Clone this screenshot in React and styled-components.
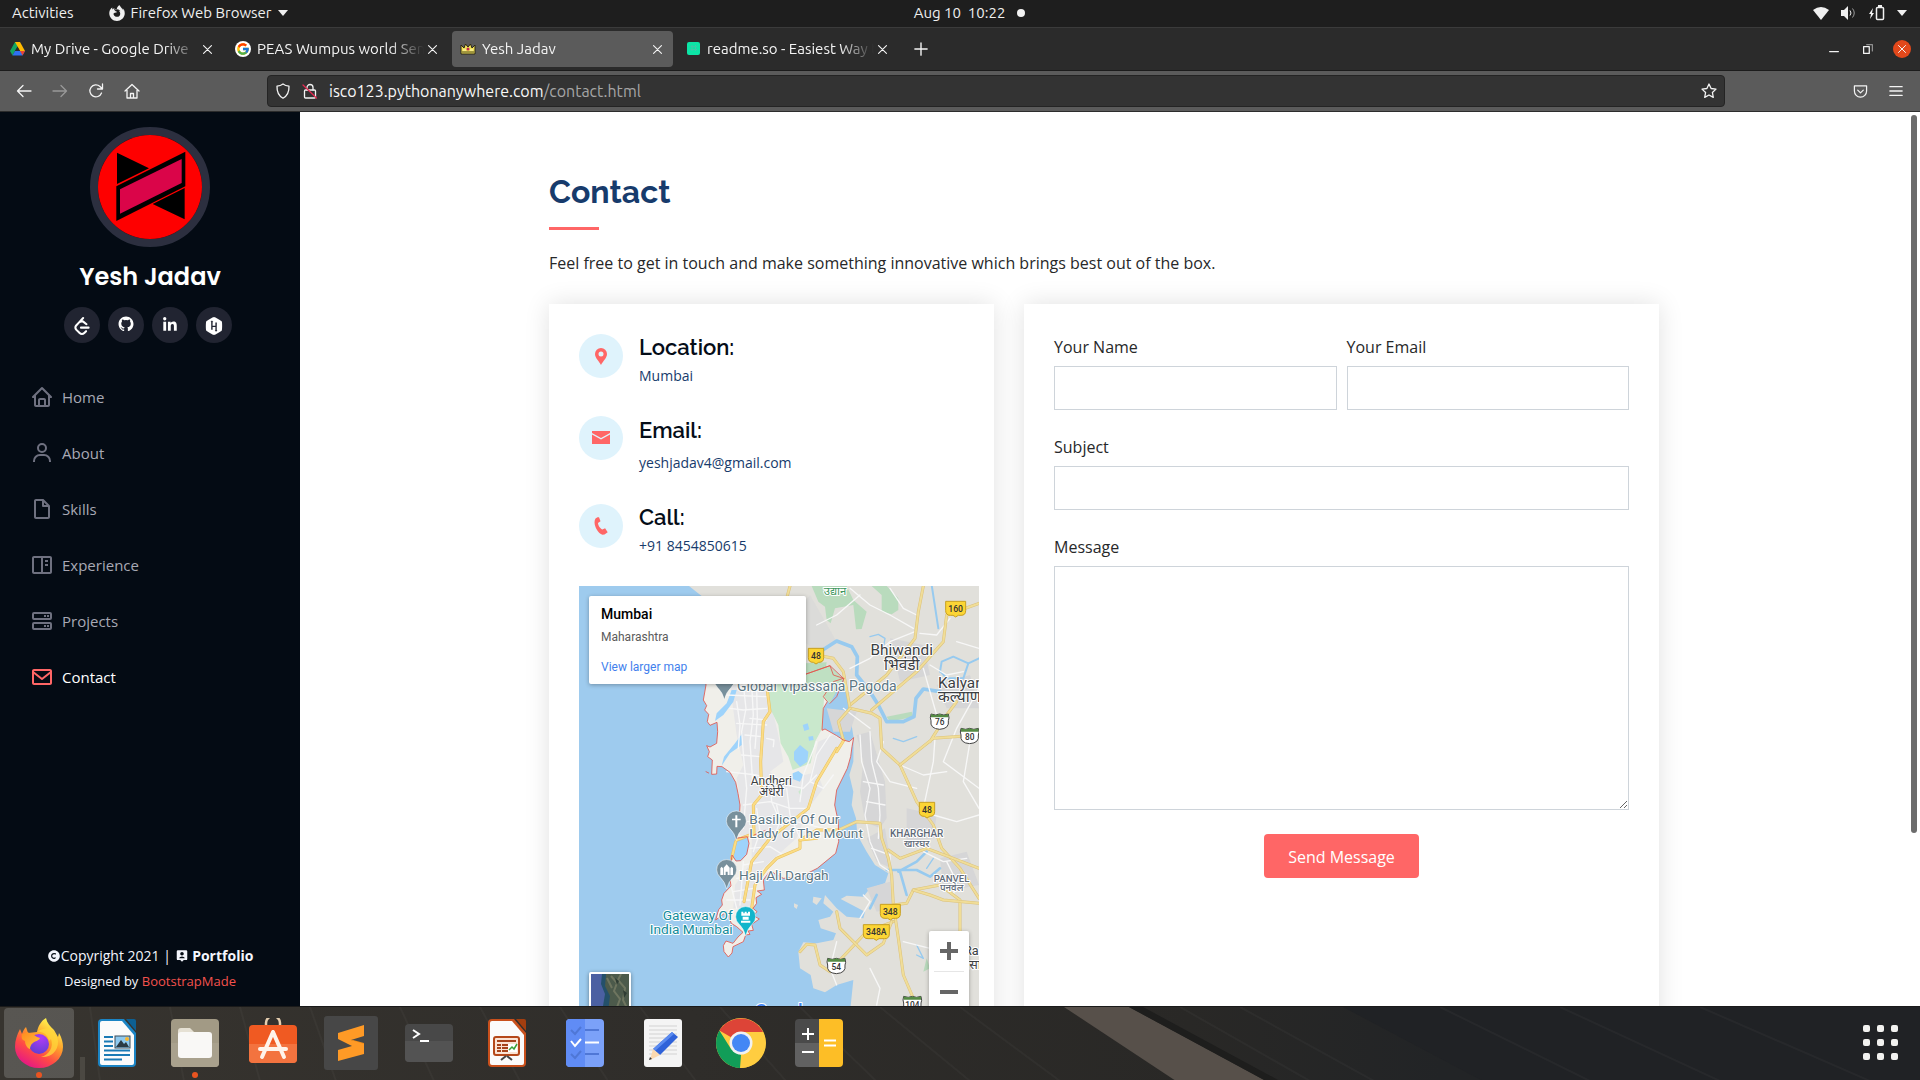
import React from "react";
import styled, { createGlobalStyle, css } from "styled-components";
import {
  BiHome,
  BiUser,
  BiFileBlank,
  BiBookContent,
  BiServer,
  BiEnvelope,
  BiLogoGithub,
  BiLogoLinkedin,
  BiSolidCopyright,
  BiSolidUserPin,
} from "react-icons/bi";
import { SiLeetcode, SiFirefoxbrowser } from "react-icons/si";
import { FaHackerrank } from "react-icons/fa";
import { FcGoogle } from "react-icons/fc";

const ui = `Ubuntu, "Open Sans", sans-serif`;
const body = `"Open Sans", "Noto Sans", sans-serif`;
const heading = `Raleway, Inter, sans-serif`;
const coral = "#ff6666";

const GlobalStyle = createGlobalStyle`
  *, *::before, *::after { box-sizing: border-box; }
  html, body { margin: 0; padding: 0; }
  body { background: #1e1e1e; font-family: ${body}; color: #272829; overflow: hidden; }
  h1, h2, h3, p, ul { margin: 0; padding: 0; }
  ul { list-style: none; }
  button { font: inherit; border: 0; padding: 0; background: none; color: inherit; cursor: pointer; }
  a { text-decoration: none; color: inherit; }
  svg { display: block; }
`;

const Desktop = styled.div`
  display: flex;
  flex-direction: column;
  height: 100vh;
`;

/* ---------- system bar ---------- */

const SystemBar = styled.header`
  display: grid;
  grid-template-columns: 1fr auto 1fr;
  align-items: center;
  flex: none;
  height: 28px;
  padding: 0 13px 1px 12px;
  border-bottom: 1px solid #3b3b3b;
  background: #1e1e1e;
  color: #f0f0f0;
  font: 15px/26px ${ui};
`;

const SystemGroup = styled.div`
  display: flex;
  align-items: center;
  gap: ${(p) => p.$gap}px;
  justify-content: ${(p) => (p.$end ? "flex-end" : "flex-start")};
`;

const SystemButton = styled.button`
  display: flex;
  align-items: center;
  gap: 6px;
`;

const Clock = styled.time`
  white-space: pre;
  position: relative;
  &::after {
    content: "";
    position: absolute;
    right: -20px;
    top: 9px;
    width: 8px;
    height: 8px;
    border-radius: 50%;
    background: #f2f2f2;
  }
`;

/* ---------- browser chrome ---------- */

const TabStrip = styled.div`
  display: flex;
  align-items: center;
  flex: none;
  height: 43px;
  padding-right: 9px;
  border-bottom: 1px solid #1c1c1c;
  background: #2b2b2b;
  color: #f4f4f4;
`;

const Tab = styled.div`
  display: flex;
  align-items: center;
  width: 221px;
  height: 36px;
  margin: 0 2px;
  padding: 0 8px;
  border-radius: 4px;
  background: ${(p) => (p.$active ? "#5b5b5b" : "transparent")};
`;

const TabTitle = styled.span`
  flex: 1;
  min-width: 0;
  margin-left: 6px;
  overflow: hidden;
  white-space: nowrap;
  font: 15px/22px ${ui};
  mask-image: linear-gradient(to right, #000 calc(100% - 34px), transparent);
`;

const TabClose = styled.button`
  width: 16px;
  height: 16px;
  display: grid;
  place-items: center;
`;

const NewTab = styled.button`
  width: 42px;
  height: 36px;
  display: grid;
  place-items: center;
`;

const WindowControls = styled.div`
  display: flex;
  align-items: center;
  gap: 16px;
  margin-left: auto;
`;

const WindowButton = styled.button`
  display: grid;
  place-items: center;
  width: 18px;
  height: 18px;
  border-radius: 50%;
  background: ${(p) => (p.$close ? "#e2481b" : "transparent")};
`;

const NavBar = styled.div`
  display: flex;
  align-items: center;
  flex: none;
  height: 41px;
  padding: 0 6px;
  border-bottom: 1px solid #2c2c2c;
  background: #5b5b5b;
  color: #f4f4f4;
`;

const NavButton = styled.button`
  display: grid;
  place-items: center;
  width: 36px;
  height: 32px;
  opacity: ${(p) => (p.$dim ? 0.4 : 1)};
`;

const Spacer = styled.div`
  width: 117px;
`;

const AddressBar = styled.form`
  display: flex;
  align-items: center;
  flex: 1;
  height: 32px;
  padding: 0 7px;
  border: 1px solid #242424;
  border-radius: 4px;
  background: #333333;
`;

const AddressIcon = styled.span`
  display: grid;
  place-items: center;
  width: ${(p) => p.$w || 16}px;
`;

const Address = styled.a`
  flex: 1;
  font: 16px/24px ${ui};
  color: #f8f8f8;
  span { color: #a6a6a6; }
`;

/* ---------- page ---------- */

const Page = styled.div`
  display: flex;
  flex: 1;
  min-height: 0;
  background: #fff;
`;

const Sidebar = styled.aside`
  display: flex;
  flex-direction: column;
  flex: none;
  width: 300px;
  padding: 15px 0;
  background: #040b14;
  color: #fff;
`;

const Avatar = styled.div`
  width: 120px;
  height: 120px;
  margin: 0 auto;
  border: 8px solid #2c2f3f;
  border-radius: 50%;
  overflow: hidden;
`;

const Name = styled.h1`
  margin: 12px 0;
  font: 600 24px/36px Poppins, Inter, sans-serif;
  text-align: center;
`;

const Socials = styled.div`
  display: flex;
  justify-content: center;
  gap: 8px;
  margin-right: 4px;
`;

const SocialLink = styled.a`
  display: grid;
  place-items: center;
  width: 36px;
  height: 36px;
  padding: ${(p) => (p.$raised ? "0 0 3px" : "2px 0 0")};
  border-radius: 50%;
  background: #212431;
  font-size: 18px;
`;

const Menu = styled.ul`
  display: flex;
  flex-direction: column;
  gap: 32px;
  margin-top: 42px;
  padding-left: 30px;
`;

const MenuLink = styled.a`
  display: flex;
  align-items: center;
  gap: 8px;
  height: 24px;
  font-size: 15px;
  color: ${(p) => (p.$active ? "#fff" : "#a8a9b4")};
  svg {
    font-size: 24px;
    color: ${(p) => (p.$active ? coral : "#6f7180")};
  }
`;

const SideFooter = styled.footer`
  display: flex;
  flex-direction: column;
  align-items: center;
  gap: 5px;
  margin-top: auto;
  color: #f4f6fd;
`;

const Copyright = styled.p`
  display: flex;
  align-items: center;
  white-space: pre;
  font-size: 14px;
  line-height: 21px;
`;

const Credit = styled.p`
  font-size: 13px;
  line-height: 20px;
  a { color: #f4524d; }
`;

const Main = styled.main`
  flex: 1;
  min-width: 0;
  padding: 60px 15px;
  overflow-y: auto;
  scrollbar-width: none;
`;

const Container = styled.section`
  max-width: 1110px;
  margin: 0 auto;
`;

const Title = styled.h2`
  font: 700 32px/40px ${heading};
  color: #173b6c;
  &::after {
    content: "";
    display: block;
    width: 50px;
    height: 3px;
    margin-top: 15px;
    background: ${coral};
  }
`;

const Lead = styled.p`
  margin: 20px 0 28px;
  font-size: 16px;
  line-height: 26px;
`;

const Columns = styled.div`
  display: grid;
  grid-template-columns: 445fr 635fr;
  gap: 30px;
`;

const Card = styled.div`
  min-width: 0;
  padding: 30px;
  background: #fff;
  box-shadow: 0 0 24px rgba(0, 0, 0, 0.12);
`;

const InfoItem = styled.div`
  display: flex;
  gap: 16px;
  margin-bottom: 30px;
  a, p {
    display: block;
    font-size: 14px;
    line-height: 21px;
    color: #173b6c;
  }
  a { line-height: 22px; }
`;

const InfoIcon = styled.div`
  display: grid;
  place-items: center;
  flex: none;
  width: 44px;
  height: 44px;
  border-radius: 50%;
  background: #dff3fc;
`;

const InfoTitle = styled.h3`
  margin-bottom: ${(p) => (p.$loose ? 8 : 5)}px;
  font: 600 22px/${(p) => (p.$loose ? 28 : 26)}px ${heading};
  color: #050d18;
`;

const MapFrame = styled.div`
  position: relative;
  width: 400px;
  height: 450px;
  overflow: hidden;
  font-family: Roboto, sans-serif;
`;

const MapCard = styled.div`
  position: absolute;
  left: 10px;
  top: 10px;
  width: 217px;
  height: 88px;
  padding: 9px 12px;
  border-radius: 2px;
  background: #fff;
  box-shadow: 0 1px 4px rgba(0, 0, 0, 0.3);
  color: #5b5b5b;
  font-size: 12px;
  line-height: 16px;
  h3 {
    margin-bottom: 6px;
    font-size: 14px;
    font-weight: 500;
    line-height: 18px;
    color: #000;
  }
  a { display: block; margin-top: 14px; color: #427fed; }
`;

const ZoomControls = styled.div`
  position: absolute;
  right: 10px;
  bottom: 24px;
  width: 40px;
  border-radius: 2px;
  background: #fff;
  box-shadow: 0 1px 4px rgba(0, 0, 0, 0.3);
  button {
    display: grid;
    place-items: center;
    width: 40px;
    height: 40px;
  }
  hr { margin: 0 5px; border: 0; border-top: 1px solid #e6e6e6; }
`;

const SatelliteButton = styled.button`
  position: absolute;
  left: 10px;
  bottom: 22px;
  width: 42px;
  height: 42px;
  border: 2px solid #fff;
  border-radius: 2px;
  overflow: hidden;
  box-shadow: 0 1px 4px rgba(0, 0, 0, 0.4);
`;

const Form = styled.form`
  display: flex;
  flex-direction: column;
  gap: 24px;
`;

const FormRow = styled.div`
  display: grid;
  grid-template-columns: 1fr 1fr;
  gap: 10px;
`;

const Field = styled.label`
  display: flex;
  flex-direction: column;
  gap: 6px;
  font-size: 16px;
  line-height: 26px;
`;

const fieldBox = css`
  width: 100%;
  padding: 10px 12px;
  border: 1px solid #ced4da;
  border-radius: 0;
  background: #fff;
  font: 14px ${body};
`;

const Input = styled.input`
  ${fieldBox}
  height: 44px;
`;

const TextArea = styled.textarea`
  ${fieldBox}
  display: block;
  height: 244px;
  resize: vertical;
`;

const SendButton = styled.button`
  align-self: center;
  padding: 10px 24px 8px;
  border-radius: 4px;
  background: ${coral};
  color: #fff;
  font-size: 16px;
  line-height: 26px;
`;

const Scrollbar = styled.div`
  flex: none;
  width: 12px;
  padding: 3px 3px 0;
  background: #fff;
  &::before {
    content: "";
    display: block;
    width: 6px;
    height: calc(80% + 5px);
    border-radius: 3px;
    background: #6c6c6c;
  }
`;

/* ---------- dock ---------- */

const Dock = styled.nav`
  position: relative;
  display: flex;
  align-items: center;
  gap: 8px;
  flex: none;
  height: 74px;
  padding: 0 22px 2px 4px;
  border-top: 1px solid #1a1a1a;
  background: linear-gradient(90deg, #37342f 0, #2f2d2a 36%, #292826 62%, #222426 75%, #222326 100%);
  overflow: hidden;
`;

const Wallpaper = styled.svg`
  position: absolute;
  left: 0;
  top: 0;
`;

const DockItem = styled.button`
  position: relative;
  display: grid;
  place-items: center;
  width: 70px;
  height: 70px;
  border-radius: 4px;
  background: ${(p) => (p.$active ? "rgba(255,255,255,0.17)" : "transparent")};
  ${(p) =>
    p.$running &&
    css`
      &::after {
        content: "";
        position: absolute;
        left: 32px;
        bottom: 0;
        width: 6px;
        height: 6px;
        border-radius: 50%;
        background: #e95420;
      }
    `}
`;

const AppsButton = styled.button`
  position: relative;
  display: grid;
  grid-template-columns: repeat(3, 7px);
  gap: 7px;
  margin-left: auto;
  i {
    height: 7px;
    border-radius: 2px;
    background: #f2f2f0;
  }
`;

/* ---------- drawings ---------- */

const Line = ({ d, size = 16, w = 1.3, children }) => (
  <svg width={size} height={size} viewBox="0 0 16 16" fill="none" stroke="currentColor" strokeWidth={w} strokeLinecap="round" strokeLinejoin="round">
    {d && <path d={d} />}
    {children}
  </svg>
);

const Caret = () => (
  <svg width="10" height="6" viewBox="0 0 10 6" fill="currentColor"><path d="M0 0h10L5 6z" /></svg>
);

const DriveIcon = () => (
  <svg width="15" height="14" viewBox="0 0 15 14">
    <path d="M5 0h5L5 9l-2.500 4.500L0 9z" fill="#13a562" />
    <path d="M5 0h5l5 9h-5z" fill="#ffba00" />
    <path d="M5 9h10l-2.500 4.500h-10z" fill="#2f71f2" />
    <path d="M10 9h5l-2.500 4.500z" fill="#ea4335" />
    <path d="M7.500 4.700 10 9H5z" fill="#2b2b2b" />
  </svg>
);

const GoogleIcon = () => (
  <svg width="16" height="16" viewBox="0 0 16 16">
    <circle cx="8" cy="8" r="8" fill="#fff" />
    <FcGoogle x="1" y="1" size="14" />
  </svg>
);

const CrownIcon = () => (
  <svg width="16" height="16" viewBox="0 0 16 16">
    <path d="M1 13V4l3 3 1.500-4L8 6l2.500-3L12 7l3-3v9z" fill="#efdf58" stroke="#2a2614" />
    <path d="M2 11h12" stroke="#2a2614" strokeWidth=".8" />
    <path d="M3 9h3M10 9h3" stroke="#fff9b8" />
    <circle cx="8" cy="8" r="1.500" fill="#c22852" />
  </svg>
);

const ReadmeIcon = () => (
  <svg width="16" height="14" viewBox="0 0 16 14">
    <rect x="2" width="13" height="13" rx="2" fill="#0ce5a6" />
    <path d="M7 3v6M10.500 3v6M5.500 4.700H12M5.500 7.500H12" stroke="#3fc9a8" />
  </svg>
);

const LogoMark = () => (
  <svg width="104" height="104" viewBox="294 75 312 312">
    <rect x="294" y="75" width="312" height="312" fill="#fe0000" />
    <path d="M351 128 447 175 351 222zM554 234v94l-96-46z" />
    <path d="M349 229 556 125v104L349 333z" />
    <path d="M360 238 545 147v72L360 311z" fill="#da0549" />
  </svg>
);

const CloseX = ({ size = 9 }) => <Line size={size} w={2} d="M1 1l14 14M15 1 1 15" />;

/* ---------- map ---------- */

const sea = "#9ecbee";

const Highway = ({ d, w = 9, inner }) => (
  <>
    <path d={d} stroke={inner ? "#e9c25e" : "#dcc27a"} strokeWidth={w + 3} />
    <path d={d} stroke={inner ? "#fbdc86" : "#f0dd98"} strokeWidth={w} />
  </>
);

const peninsula =
  "M405 290 408 330 400 375 410 392 404 405 416 418 412 440 420 451 441 442 443 470 440 505 420 516 410 512 418 530 413 545 427 555 425 598 440 597 441 574 456 575 480 592 497 622 504 655 510 690 508 730 498 790 532 785 537 805 530 838 512 857 498 858 486 840 482 870 478 900 483 933 462 955 455 975 457 990 446 1004 437 1035 470 1010 484 1045 500 1055 519 1072 504 1086 489 1105 468 1098 460 1112 462 1130 475 1146 486 1134 489 1115 520 1100 527 1080 540 1078 534 1068 550 1066 545 1048 568 1032 550 1022 561 1010 549 1000 560 985 558 968 575 958 562 948 583 945 580 915 600 888 640 910 690 906 742 880 797 835 806 800 805 740 794 690 800 645 832 580 842 545 846 515 851 488 838 500 820 495 800 482 765 462 756 466 760 400 772 380 760 365 790 320 820 310 780 272 700 300 690 290z";

const minorRoads = [
  "M520 330 528 400 515 470 522 560 530 640 525 700 520 760",
  "M545 330 550 420 540 500 548 620",
  "M480 400 520 405 590 400M500 445 590 450M470 360 590 365M525 480 575 485M515 540 570 545",
  "M470 590 560 600 620 625 700 640 740 600",
  "M520 690 600 680 660 700 720 700M530 740 640 730 700 745 760 760",
  "M600 600 605 680 640 760 600 800M650 640 660 720 690 790",
  "M540 820 600 815 640 840M520 870 580 860M500 910 560 900M490 950 550 940M470 975 540 975M480 920 500 1000M520 860 510 990",
  "M540 430 590 435M560 340 562 430 555 520M590 490 612 495 610 515M500 380 510 450 505 520M560 700 570 770 550 830M620 690 630 740 610 790",
  "M740 500 700 600 690 680M780 480 740 540 720 620 760 640 790 600",
  "M870 480 875 560 900 640 885 720 900 800 930 870 960 890",
  "M900 470 905 560 925 640 930 720 925 790M880 620 940 630M890 680 945 690M905 820 960 840 960 870",
  "M1035 170 960 200 900 250 840 280M1140 130 1100 180 1050 175M1160 200 1227 220",
  "M840 40 900 90 960 120 1030 160M740 150 800 120 870 60",
  "M1080 270 1130 300 1180 290M1060 280 1100 420 1090 560 1060 700",
  "M1227 340 1160 460 1120 560 1227 640M1200 500 1180 620 1227 700M990 570 1060 600 1130 590",
  "M1090 720 1160 740 1227 720M1060 830 1120 860 1190 850M1130 860 1160 920 1150 960",
  "M800 1100 780 1180 800 1230M870 1030 900 980 880 960M900 1180 930 1240 920 1290M1000 1100 1080 1120",
  "M960 40 1000 100 1040 120M820 400 860 430 900 460M940 500 920 560 960 620 1040 640",
];

const cityHighways = [
  "M560 327 590 330 600 410 580 440 572 560 575 660 550 690 552 780",
  "M800 520 740 620 715 700 600 790 545 860 522 980",
  "M822 495 800 530",
  "M805 765 740 765 690 795 690 820 620 850 590 880 555 930 545 1000",
  "M690 795 740 790",
  "M497 800 485 850M500 795 540 780",
];

const highways = [
  "M660 33 650 70M1060 33 1045 110 1035 190 950 300 840 390",
  "M740 240 790 250 820 290 840 400 905 415 930 430 935 520 990 570 1040 680 1090 750 1115 820 1170 880 1227 970",
  "M1227 85 1130 120 1120 200 1040 290 905 405",
  "M840 400 805 440 820 495",
  "M990 570 1090 490 1227 480M1080 500 1130 420 1160 380",
  "M805 765 860 740 930 745 935 790 955 850 965 900 970 990 985 1090 1000 1200 1040 1293 1050 1383",
  "M955 825 990 850 1070 820 1150 850 1227 880",
  "M970 990 1010 985 1030 945 1110 930 1170 975 1170 1100 1160 1383",
  "M1030 945 1080 960 1120 975 1227 985",
  "M970 1040 890 1070 810 1155 780 1190 750 1170 735 1110 710 1108 690 1130",
  "M800 1010 810 1060 890 1140 940 1105 965 1040",
];

const Shield = ({ x, y, w, children }) => (
  <g>
    <path d={`M${x - w / 2} ${y - 22}h${w}v28q0 14-14 14h-${w / 2 - 22}l-8 5-8-5h-${w / 2 - 22}q-14 0-14-14z`} fill="#fcd535" stroke="#c79f22" strokeWidth="3" />
    <text x={x} y={y + 9} fontSize="26" fontWeight="500" textAnchor="middle" fill="#333">{children}</text>
  </g>
);

const StateShield = ({ x, y, children }) => (
  <g>
    <path d={`M${x - 26} ${y - 22}q14 6 26 0 12 6 26 0 4 14 0 20 4 24-26 26-30-2-26-26-4-8 0-20z`} fill="#fff" stroke="#444" strokeWidth="3" />
    <path d={`M${x - 26} ${y - 22}q14 6 26 0 12 6 26 0v10h-52z`} fill="#558b44" />
    <text x={x} y={y + 12} fontSize="25" fontWeight="500" textAnchor="middle" fill="#333">{children}</text>
  </g>
);

const Pin = ({ x, y, color, children }) => (
  <g>
    <path d={`M${x} ${y + 57}q-5-22-20-36a30 30 0 1 1 40 0q-15 14-20 36z`} fill={color} stroke="#fff" strokeWidth="1.500" />
    <g transform={`translate(${x} ${y})`} fill="#fff">{children}</g>
  </g>
);

const Label = ({ lines, x, y, size, fill = "#3c4043", lh = 44, weight = 400, anchor = "middle" }) => (
  <text fontSize={size} fontWeight={weight} fill={fill} stroke="#fff" strokeWidth="6" strokeLinejoin="round" paintOrder="stroke" textAnchor={anchor}>
    {lines.map((t, i) => (
      <tspan key={t} x={x} y={y + i * lh}>{t}</tspan>
    ))}
  </text>
);

const MumbaiMap = () => (
  <svg width="400" height="450" viewBox="27 33 1200 1350" fontFamily='Roboto, "Noto Sans Devanagari", "Noto Sans", sans-serif' role="img" aria-label="Map of Mumbai">
    <rect x="27" y="33" width="1200" height="1350" fill={sea} />
    <path d="M357 33 410 75 500 200 640 300 700 300 780 272 822 310 851 488 850 560 838 600 850 650 845 690 858 730 862 780 890 830 915 870 955 895 945 925 900 940 880 965 830 962 812 972 885 1010 880 1030 830 1025 800 1000 765 960 760 985 790 1010 780 1025 745 1035 752 1060 798 1075 790 1095 740 1105 700 1102 685 1130 690 1180 722 1200 730 1240 765 1252 800 1230 850 1215 842 1293 848 1383H1227V33z" fill="#e1e0db" />
    <path d="M672 985l12 5-4 12-8-6zM730 965l25 5-15 20-12-8z" fill="#e1e0db" />
    <g fill="#d6d6d7">
      <path d="M860 480 900 470 945 620 950 730 930 760 885 740 870 650 880 560zM890 790 945 760 965 880 920 860zM960 190 1060 210 1080 300 990 320zM1100 330 1200 300 1227 400 1130 400zM770 400 860 410 840 470 790 470zM1110 850 1190 830 1227 930 1120 950zM1010 700 1100 720 1090 790 1010 800zM890 940 960 920 970 1000 920 1010z" />
      <path d="M600 80 680 110 720 60 800 200 740 230 690 190z" opacity=".5" />
    </g>
    <g fill="#b9dbbd">
      <path d="M725 33 745 80 765 95 770 135 782 145 795 100 850 90 858 163 875 162 890 110 850 75 830 33zM905 33 935 60 935 110 965 118 985 105 985 70 950 33zM708 300 705 265 770 262 765 290z" />
      <path d="M950 425 1025 410 1030 425 960 440zM1070 1150 1060 1190 1080 1180zM640 1290 700 1285z" />
    </g>
    <g fill="none" stroke="#97caef" strokeLinecap="round" strokeLinejoin="round">
      <path d="M757 226 800 198 845 215 862 245 860 300 900 350 925 390 950 440 1000 440 1032 425 1038 370 1060 342 1110 350" strokeWidth="11" />
      <path d="M1085 30 1105 160 M1110 290 1115 260 1150 245 1195 265 1180 310 1130 310 1112 290M1195 265 1227 250" strokeWidth="6" />
      <path d="M985 890 1040 860 1070 830M950 885 1040 885 1080 905 1110 880M990 890 1010 960M920 960 900 1000" strokeWidth="8" />
      <path d="M900 185 925 178 945 190 940 220M970 490 1000 500 1040 485M1040 1110 1060 1150 1040 1140M1090 850 1070 880" strokeWidth="4" />
    </g>
    <path d={peninsula} fill="#f0efea" />
    <path d="M480 330 590 330 625 480 640 560 600 590 630 620 740 590 760 640 715 700 680 790 600 860 560 900 540 1000 490 1000 495 930 545 860 545 790 510 780 515 700 500 610 520 570 500 480zM745 500 790 480 820 500 750 600 720 610z" fill="#e6e6e8" />
    <path d="M595 327H757L785 300 800 330 780 385 762 370 757 460 735 500 722 565 668 585 655 545 632 505 625 450 600 400z" fill="#c9e8cc" />
    <path d="M700 300 780 272 820 312 780 385 765 365 765 327 700 327z" fill="#bfe0c2" />
    <path d="M685 650 695 640 692 662z" fill="#c9e8cc" />
    <g fill="#9ed3fb">
      <path d="M672 530 690 510 715 530 712 560 690 575 672 555zM668 595 685 588 700 600 690 620 668 612zM698 450l15-5 5 18-15 5zM715 485l14-2 2 12-14 2z" />
      <path d="M500 345 490 380 460 420 435 438 440 415 470 385 485 345zM517 475 515 510 480 535 455 572 462 545 495 505zM530 790 537 810 530 838 512 857 498 856 488 840 495 805z" />
    </g>
    <g fill="none" strokeLinecap="round" strokeLinejoin="round">
      <g stroke="#f7f7f7" strokeWidth="4">{minorRoads.map((d) => <path key={d} d={d} />)}</g>
      {highways.map((d) => <Highway key={d} d={d} w={6} />)}
      {cityHighways.map((d) => <Highway key={d} d={d} w={6} inner />)}
      <path d={peninsula} stroke="#e2564d" strokeWidth="2.500" />
      <path d="M780 385 800 365 822 310M700 300 780 272 790 300 820 310M408 590l8 4M552 780l35-14" stroke="#e2564d" strokeWidth="2.500" />
    </g>
    <Shield x={1157} y={101} w={60}>160</Shield>
    <Shield x={738} y={242} w={46}>48</Shield>
    <Shield x={1071} y={704} w={46}>48</Shield>
    <Shield x={961} y={1010} w={60}>348</Shield>
    <Shield x={919} y={1071} w={78}>348A</Shield>
    <StateShield x={1109} y={439}>76</StateShield>
    <StateShield x={1199} y={482}>80</StateShield>
    <StateShield x={799} y={1172}>54</StateShield>
    <StateShield x={1027} y={1286}>104</StateShield>
    <Pin x={463} y={317} color="#78909c"><circle r="8" /></Pin>
    <Pin x={499} y={739} color="#78909c"><path d="M-3-18h6v10h10v5H3v21h-6V-3h-10v-5h10z" /></Pin>
    <Pin x={470} y={885} color="#78909c"><path d="M-19 15V-5l4-5 4 5v20zM-9 15v-22l9-10 9 10v22H3V5h-6v10zM11 15V-5l4-5 4 5v20z" /></Pin>
    <Pin x={527} y={1026} color="#12b5cb"><path d="M-13-16h6v5h4v-5h6v5h4v-5h6V-4H-13zM-9-1H9v9H-9zM-14 11h28v6h-28z" /></Pin>
    <Label lines={["उद्यान"]} x={795} y={61} size={34} fill="#3f9760" />
    <Label lines={["Bhiwandi", "भिवंडी"]} x={995} y={241} size={46} />
    <Label lines={["Kalyan", "कल्याण"]} x={1104} y={338} size={46} anchor="start" />
    <Label lines={["Global Vipassana Pagoda"]} x={501} y={347} size={42} fill="#5b7683" anchor="start" />
    <Label lines={["Andheri", "अंधेरी"]} x={604} y={630} size={36} lh={34} />
    <Label lines={["Basilica Of Our", "Lady of The Mount"]} x={538} y={747} size={41} lh={42} fill="#5b7683" anchor="start" />
    <Label lines={["Haji Ali Dargah"]} x={507} y={915} size={41} fill="#5b7683" anchor="start" />
    <Label lines={["Gateway Of", "India Mumbai"]} x={488} y={1035} size={41} lh={42} fill="#128d9c" anchor="end" />
    <Label lines={["KHARGHAR", "खारघर"]} x={1040} y={787} size={30} lh={29} weight={500} fill="#5f6a78" />
    <Label lines={["PANVEL", "पनवेल"]} x={1145} y={922} size={29} lh={27} weight={500} fill="#5f6a78" />
    <Label lines={["Rasa", "रसा"]} x={1182} y={1141} size={38} lh={40} anchor="start" />
    <Label lines={["Google"]} x={555} y={1325} size={54} fill="#4285f4" weight={500} anchor="start" />
  </svg>
);

const SatelliteThumb = () => (
  <svg width="38" height="38" viewBox="0 0 38 38">
    <rect width="38" height="38" fill="#4c5a4b" />
    <path d="M0 0h12l-1 10 4 8-3 20H0z" fill="#4b60a2" />
    <path d="M11 0h4l-1 12 5 10-2 16h-6l3-18-4-10z" fill="#24506a" />
    <path d="M20 2l6 7-3 8 6 8-4 11M30 0l-3 6 7 8-2 12 4 8M16 4l5 10" fill="none" stroke="#7d8068" strokeWidth="2" opacity=".7" />
    <path d="M24 4l4 3-2 4zM32 16l4 3-3 5z" fill="#2f3d34" />
  </svg>
);

/* ---------- dock icons ---------- */

const FirefoxLogo = () => (
  <svg width="48" height="50" viewBox="0 0 48 50">
    <defs>
      <linearGradient id="fx-body" x1=".8" y1=".1" x2=".25" y2="1">
        <stop offset="0" stopColor="#fff44f" /><stop offset=".35" stopColor="#ffa02a" />
        <stop offset=".65" stopColor="#ff4a45" /><stop offset="1" stopColor="#e3138b" />
      </linearGradient>
      <radialGradient id="fx-globe" cx=".6" cy=".2" r=".9">
        <stop offset="0" stopColor="#b03bf5" /><stop offset="1" stopColor="#5a3fd0" />
      </radialGradient>
      <linearGradient id="fx-head" x1="0" y1="0" x2="1" y2="1">
        <stop offset="0" stopColor="#ff8a1e" /><stop offset="1" stopColor="#ffc23a" />
      </linearGradient>
    </defs>
    <path d="M31 0c1 5 4 8 8 12l4 7 1-4c3 5 4 10 4 14A24 21 0 0 1 0 29c0-7 2-12 5-18l2 5c1-3 2-5 4-7l2 6 9-1c1-6 4-11 9-14z" fill="url(#fx-body)" />
    <circle cx="24" cy="26" r="10" fill="url(#fx-globe)" />
    <path d="M7 16l5-2 7 3 3 2 3 1c-1 3-5 3-7 5-2 1-3 4-3 6-2 0-5-4-5-8-3-1-4-3-3-7z" fill="url(#fx-head)" />
    <path d="M22 14c6-1 11 3 12 9l2-2c3 8-2 16-10 18 9 1 17-5 17-15 0-7-5-9-8-14-5 0-9 1-13 4z" fill="#ffd83b" opacity=".75" />
  </svg>
);

const PageIcon = ({ edge, dark, children }) => (
  <svg width="38" height="48" viewBox="0 0 38 48">
    <path d="M4 0h22l12 14v30a4 4 0 0 1-4 4H4a4 4 0 0 1-4-4V4a4 4 0 0 1 4-4z" fill={edge} />
    <path d="M4 2h20l12 14v28a2 2 0 0 1-2 2H4a2 2 0 0 1-2-2V4a2 2 0 0 1 2-2z" fill="#fbfbfb" />
    <path d="M28 0h8a2 2 0 0 1 2 2v10z" fill={dark} />
    {children}
  </svg>
);

const WriterIcon = () => (
  <PageIcon edge="#1b84c4" dark="#0d6093">
    <path d="M6 18h9M6 22.500h9M6 27h9M6 31.500h26M6 36h26M6 40.500h18" stroke="#1a7ab5" strokeWidth="2" />
    <rect x="17" y="17" width="15" height="12" fill="#8ec9ef" stroke="#3b4c5a" />
    <path d="M18 28l5-7 3 4 2-2 3 5z" fill="#2b3a44" /><circle cx="29" cy="20" r="2" fill="#f8b62d" />
  </PageIcon>
);

const FilesIcon = () => (
  <svg width="48" height="48" viewBox="0 0 48 48">
    <rect width="48" height="48" rx="4" fill="#a29a85" /><path d="M0 24h48v20a4 4 0 0 1-4 4H4a4 4 0 0 1-4-4z" fill="#a9a18d" />
    <path d="M7 12a3 3 0 0 1 3-3h9l4 4h14v6H7z" fill="#e6e1d4" />
    <rect x="7" y="13" width="34" height="26" rx="3" fill="#f9f8f6" />
  </svg>
);

const SoftwareIcon = () => (
  <svg width="48" height="50" viewBox="0 -2 48 50">
    <path d="M17 9V3a7 7 0 0 1 14 0v6" fill="none" stroke="#e6cfb0" strokeWidth="2.500" />
    <rect y="5" width="48" height="38" rx="4" fill="#f05a22" /><path d="M0 24h48v15a4 4 0 0 1-4 4H4a4 4 0 0 1-4-4z" fill="#f3733f" />
    <path d="M24 12 13 37M24 12l11 25M11 29h26" stroke="#fff3ea" strokeWidth="4" fill="none" strokeLinecap="round" strokeLinejoin="round" />
  </svg>
);

const SublimeIcon = () => (
  <svg width="54" height="54" viewBox="0 0 54 54">
    <rect width="54" height="54" rx="3" fill="#474747" />
    <path d="M40 27 29 24 23 27l17 5z" fill="#f08a14" />
    <path d="M14 23v-6l26-8v11l-13 4 13 4v10l-26 7V34l14-4z" fill="#ff9a26" />
  </svg>
);

const TerminalIcon = () => (
  <svg width="48" height="38" viewBox="0 0 48 38">
    <rect width="48" height="38" rx="4" fill="#484848" /><path d="M0 17h48v17a4 4 0 0 1-4 4H4a4 4 0 0 1-4-4z" fill="#535353" />
    <path d="M8 6l6 4-6 4M15 17h9" fill="none" stroke="#fff" strokeWidth="2" />
  </svg>
);

const ImpressIcon = () => (
  <PageIcon edge="#c9501c" dark="#a33e0f">
    <rect x="6" y="18" width="25" height="18" rx="2" fill="#fbe3d4" stroke="#b5481a" strokeWidth="2" />
    <path d="M9 22h19M9 26h4M9 29h4M9 32h4M14 26h6M14 29h6M14 32h6" stroke="#a6441c" strokeWidth="2" />
    <rect x="20" y="25" width="9" height="8" fill="#fff" /><path d="M21 31l3-3 2 2 3-5" stroke="#3aa137" strokeWidth="1.500" fill="none" />
    <path d="M18 37l-5 4M19 37l5 4" stroke="#444" strokeWidth="2" />
  </PageIcon>
);

const TodoIcon = () => (
  <svg width="38" height="48" viewBox="0 0 38 48">
    <rect width="38" height="48" rx="4" fill="#7ba1f9" /><path d="M4 0h15v48H4a4 4 0 0 1-4-4V4a4 4 0 0 1 4-4z" fill="#608cf5" />
    <g fill="none" strokeWidth="2" stroke="#4f77d6"><path d="M5 11l4 4 6-7M5 35l4 4 6-7M19 11h14M19 35h14" /></g>
    <path d="M5 22l4 5 6-7M19 23.500h14" fill="none" stroke="#fff" strokeWidth="2" />
  </svg>
);

const EditorIcon = () => (
  <svg width="38" height="48" viewBox="0 0 38 48">
    <rect width="38" height="48" rx="3" fill="#f4f4f4" />
    <path d="M5 7h28M5 11h28M5 15h28M5 19h28M5 23h28M5 27h28M5 31h28M5 35h28" stroke="#d2d2d2" />
    <path d="M28 13l6 5-18 18-7-6z" fill="#2f62d9" /><path d="M28 13l2 2-19 17-2-2z" fill="#5b8bf0" />
    <path d="M9 30l7 6-10 5z" fill="#fbd9b0" /><path d="M6 38l2 2-3 1z" fill="#333" />
  </svg>
);

const ChromeIcon = () => (
  <svg width="50" height="50" viewBox="0 0 50 50">
    <circle cx="25" cy="25" r="25" fill="#ffcd40" />
    <path d="M25 25 3.400 12.500A25 25 0 0 1 47 14H25z" fill="#dd4437" />
    <path d="M3.400 12.500 15 31l10 6-1 13A25 25 0 0 1 3.400 12.500z" fill="#119d58" />
    <path d="M47 14a25 25 0 0 1-23 36l11-19V14z" fill="#ffcd40" />
    <circle cx="25" cy="25" r="11.500" fill="#f1f1f1" /><circle cx="25" cy="25" r="9" fill="#4387f5" />
  </svg>
);

const CalculatorIcon = () => (
  <svg width="48" height="48" viewBox="0 0 48 48">
    <path d="M4 0h20v24H0V4a4 4 0 0 1 4-4z" fill="#4a4a4a" /><path d="M0 24h24v24H4a4 4 0 0 1-4-4z" fill="#616161" />
    <path d="M24 0h20a4 4 0 0 1 4 4v40a4 4 0 0 1-4 4H24z" fill="#fdbe26" />
    <path d="M7 15h12M13 9v12M7 33h12M29 21.500h12M29 26.500h12" stroke="#fff" strokeWidth="2" />
  </svg>
);

/* ---------- data ---------- */

const tabs = [
  { title: "My Drive - Google Drive", icon: <DriveIcon /> },
  { title: "PEAS Wumpus world Sens", icon: <GoogleIcon /> },
  { title: "Yesh Jadav", icon: <CrownIcon />, active: true },
  { title: "readme.so - Easiest Way t", icon: <ReadmeIcon /> },
];

const menu = [
  ["Home", BiHome],
  ["About", BiUser],
  ["Skills", BiFileBlank],
  ["Experience", BiBookContent],
  ["Projects", BiServer],
  ["Contact", BiEnvelope],
];

const socials = [
  { name: "LeetCode", Icon: SiLeetcode },
  { name: "GitHub", Icon: BiLogoGithub, raised: true },
  { name: "LinkedIn", Icon: BiLogoLinkedin, raised: true },
  { name: "HackerRank", Icon: FaHackerrank },
];

const apps = [
  ["Firefox", FirefoxLogo, true],
  ["Writer", WriterIcon],
  ["Files", FilesIcon, true],
  ["Software", SoftwareIcon],
  ["Sublime Text", SublimeIcon],
  ["Terminal", TerminalIcon],
  ["Impress", ImpressIcon],
  ["To Do", TodoIcon],
  ["Text Editor", EditorIcon],
  ["Chrome", ChromeIcon],
  ["Calculator", CalculatorIcon],
];

const stop = (e) => e.preventDefault();

export default function App() {
  return (
    <Desktop>
      <GlobalStyle />
      <SystemBar>
        <SystemGroup $gap={35}>
          <SystemButton>Activities</SystemButton>
          <SystemButton>
            <SiFirefoxbrowser size={16} />
            Firefox Web Browser
            <Caret />
          </SystemButton>
        </SystemGroup>
        <Clock>Aug 10  10:22</Clock>
        <SystemGroup $gap={12} $end>
          <svg width="16" height="13" viewBox="0 0 16 13" fill="currentColor"><path d="M0 3q8-6 16 0L8 13z" /></svg>
          <svg width="16" height="14" viewBox="0 0 16 14" fill="none" stroke="currentColor">
            <path d="M0 4h3l4-4v14l-4-4H0z" fill="currentColor" stroke="none" />
            <path d="M9 4.500q2 2.500 0 5" /><path d="M11.500 2.500q3.500 4.500 0 9" opacity=".6" />
          </svg>
          <svg width="16" height="16" viewBox="0 0 16 16" fill="none" stroke="currentColor">
            <path d="M4 3 0 9h2l-1 5 4-6H3z" fill="currentColor" stroke="none" />
            <path d="M9 1h4" strokeWidth="2" /><rect x="7.500" y="2.500" width="7" height="12" rx="1" strokeWidth="1.500" />
          </svg>
          <Caret />
        </SystemGroup>
      </SystemBar>

      <TabStrip>
        {tabs.map((t) => (
          <Tab key={t.title} $active={t.active}>
            {t.icon}
            <TabTitle>{t.title}</TabTitle>
            <TabClose aria-label={`Close ${t.title}`}><CloseX /></TabClose>
          </Tab>
        ))}
        <NewTab aria-label="New tab"><Line size={14} w={1.6} d="M8 1v14M1 8h14" /></NewTab>
        <WindowControls>
          <WindowButton aria-label="Minimize"><Line size={10} w={2} d="M1 12h14" /></WindowButton>
          <WindowButton aria-label="Restore">
            <Line size={10} w={2}><rect x="1" y="4" width="9" height="11" /><path d="M6 1h9v10" opacity=".5" /></Line>
          </WindowButton>
          <WindowButton $close aria-label="Close window"><CloseX size={8} /></WindowButton>
        </WindowControls>
      </TabStrip>

      <NavBar>
        <NavButton aria-label="Back"><Line d="M15 8H1.500M7 2.500 1.500 8 7 13.500" /></NavButton>
        <NavButton aria-label="Forward" $dim><Line d="M1 8h13.500M9 2.500 14.500 8 9 13.500" /></NavButton>
        <NavButton aria-label="Reload"><Line d="M13.500 10A6 6 0 1 1 12 3.500l2 2M14.500 1v5h-5" /></NavButton>
        <NavButton aria-label="Home"><Line d="M1 8 8 1.500 15 8M3 7v8h10V7M6.500 15v-4.500h3V15" /></NavButton>
        <Spacer />
        <AddressBar onSubmit={stop}>
          <AddressIcon><Line d="M8 1c2 1.500 4 2 6 2.200C14.200 9 12 13 8 15.200 4 13 1.800 9 2 3.200 4 3 6 2.500 8 1z" /></AddressIcon>
          <AddressIcon $w={38}>
            <Line>
              <rect x="2.500" y="7" width="11" height="8" rx="1" /><path d="M5 7V4.500a3 3 0 0 1 6 0V7" />
              <path d="M1 2l13.500 13" stroke="#e22850" />
            </Line>
          </AddressIcon>
          <Address href="#contact">isco123.pythonanywhere.com<span>/contact.html</span></Address>
          <AddressIcon><Line d="M8 1l2.100 4.500 4.900.6-3.600 3.400.9 4.900L8 12l-4.300 2.400.9-4.900L1 6.100l4.900-.6z" /></AddressIcon>
        </AddressBar>
        <Spacer />
        <NavButton aria-label="Save to Pocket"><Line size={15} d="M1.500 2h13v5.500a6.500 6.500 0 0 1-13 0zM5 6.500l3 3 3-3" /></NavButton>
        <NavButton aria-label="Menu"><Line size={14} w={1.5} d="M1 3h14M1 8h14M1 13h14" /></NavButton>
      </NavBar>

      <Page>
        <Sidebar>
          <Avatar><LogoMark /></Avatar>
          <Name>Yesh Jadav</Name>
          <Socials>
            {socials.map(({ name, Icon, raised }) => (
              <SocialLink key={name} href={`#${name}`} aria-label={name} $raised={raised}><Icon /></SocialLink>
            ))}
          </Socials>
          <Menu>
            {menu.map(([name, Icon]) => (
              <li key={name}>
                <MenuLink href={`#${name.toLowerCase()}`} $active={name === "Contact"}><Icon />{name}</MenuLink>
              </li>
            ))}
          </Menu>
          <SideFooter>
            <Copyright><BiSolidCopyright size={14} />Copyright 2021 | <BiSolidUserPin size={14} /><strong> Portfolio</strong></Copyright>
            <Credit>Designed by <a href="#bootstrapmade">BootstrapMade</a></Credit>
          </SideFooter>
        </Sidebar>

        <Main>
          <Container id="contact">
            <Title>Contact</Title>
            <Lead>Feel free to get in touch and make something innovative which brings best out of the box.</Lead>
            <Columns>
              <Card>
                <InfoItem>
                  <InfoIcon>
                    <svg width="12" height="17" viewBox="0 0 12 17" fill={coral}><path fillRule="evenodd" d="M6 0a6 6 0 0 1 6 6c0 4-4 7-6 11C4 13 0 10 0 6a6 6 0 0 1 6-6zm0 3.500a2.500 2.500 0 1 0 0 5 2.500 2.500 0 0 0 0-5z" /></svg>
                  </InfoIcon>
                  <div><InfoTitle>Location:</InfoTitle><p>Mumbai</p></div>
                </InfoItem>
                <InfoItem>
                  <InfoIcon>
                    <svg width="18" height="14" viewBox="0 0 18 14" fill={coral}><path d="M0 0h18v2L9 7 0 2zM0 3.500 9 8.500l9-5V13H0z" /></svg>
                  </InfoIcon>
                  <div><InfoTitle $loose>Email:</InfoTitle><a href="mailto:yeshjadav4@gmail.com">yeshjadav4@gmail.com</a></div>
                </InfoItem>
                <InfoItem>
                  <InfoIcon>
                    <svg width="14" height="18" viewBox="0 0 14 18" fill={coral}><path d="M3.500.3 1.500 1.500C-1.500 6 3 16 8.500 17.700l2-.3 3.200-2.200-2.600-4-2.800 1.300C6 11.500 4 8 4 6L6.500 4.300 5 .3z" /></svg>
                  </InfoIcon>
                  <div><InfoTitle>Call:</InfoTitle><p>+91 8454850615</p></div>
                </InfoItem>
                <MapFrame>
                  <MumbaiMap />
                  <MapCard>
                    <h3>Mumbai</h3>
                    <div>Maharashtra</div>
                    <a href="#map">View larger map</a>
                  </MapCard>
                  <SatelliteButton aria-label="Show satellite imagery"><SatelliteThumb /></SatelliteButton>
                  <ZoomControls>
                    <button aria-label="Zoom in"><svg width="18" height="18"><path d="M9 0v18M0 9h18" stroke="#666" strokeWidth="4" /></svg></button>
                    <hr />
                    <button aria-label="Zoom out"><svg width="18" height="4"><path d="M0 2h18" stroke="#666" strokeWidth="4" /></svg></button>
                  </ZoomControls>
                </MapFrame>
              </Card>

              <Card>
                <Form onSubmit={stop}>
                  <FormRow>
                    <Field>Your Name<Input type="text" name="name" /></Field>
                    <Field>Your Email<Input type="email" name="email" /></Field>
                  </FormRow>
                  <Field>Subject<Input type="text" name="subject" /></Field>
                  <Field>Message<TextArea name="message" /></Field>
                  <SendButton type="submit">Send Message</SendButton>
                </Form>
              </Card>
            </Columns>
          </Container>
        </Main>
        <Scrollbar />
      </Page>

      <Dock>
        <Wallpaper width="1920" height="74" viewBox="0 0 1920 74" aria-hidden="true">
          <path d="M1064 0h65l137 74h-90z" fill="#57504a" />
          <path d="M1129 0h14l137 74h-14z" fill="#1e1e1d" />
          <path d="M1343 0h577v74h-437z" fill="#202225" />
          <g stroke="#fff" strokeOpacity=".03" strokeWidth="2">
            <path d="M90 0l10 74M170 0l14 74M240 0l20 74M310 0l26 74M400 0l34 74M480 0l40 74M560 0l48 74M640 0l56 74M720 0l66 74M800 0l76 74M880 0l90 74M960 0l100 74M1180 0l130 74M1240 0l134 74M1440 0l150 74M1560 0l160 74M1700 0l170 74" />
          </g>
          <path d="M80 50h5v24h-5z" fill="#4b4842" />
        </Wallpaper>
        {apps.map(([name, Icon, running]) => (
          <DockItem key={name} aria-label={name} $running={running} $active={name === "Firefox"}><Icon /></DockItem>
        ))}
        <AppsButton aria-label="Show applications">
          {Array.from({ length: 9 }, (_, i) => <i key={i} />)}
        </AppsButton>
      </Dock>
    </Desktop>
  );
}
